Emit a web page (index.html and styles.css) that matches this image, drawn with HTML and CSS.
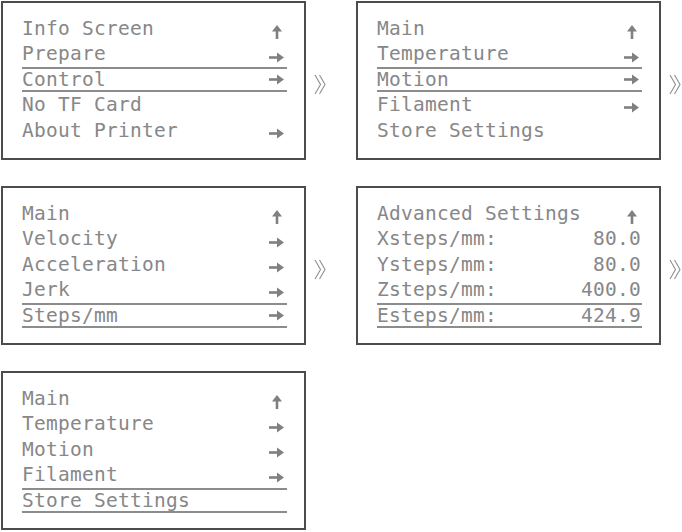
FILE: index.html
```html
<!DOCTYPE html>
<html lang="en">
<head>
<meta charset="utf-8">
<title>Printer menu screens</title>
<link rel="stylesheet" href="styles.css">
</head>
<body>
<div class="screens">

  <div class="panel">
    <div class="screen">
      <div class="row"><span class="label">Info Screen</span><svg class="icon up" viewBox="0 0 12 14"><path d="M6 14V4"/><polygon points="1,6.5 6,0 11,6.5"/></svg></div>
      <div class="row"><span class="label">Prepare</span><svg class="icon right" viewBox="0 0 15 11"><path d="M0 5.5H10"/><polygon points="8,0.5 15,5.5 8,10.5"/></svg></div>
      <div class="row sel"><span class="label">Control</span><svg class="icon right" viewBox="0 0 15 11"><path d="M0 5.5H10"/><polygon points="8,0.5 15,5.5 8,10.5"/></svg></div>
      <div class="row"><span class="label">No TF Card</span></div>
      <div class="row"><span class="label">About Printer</span><svg class="icon right" viewBox="0 0 15 11"><path d="M0 5.5H10"/><polygon points="8,0.5 15,5.5 8,10.5"/></svg></div>
    </div>
    <div class="sep"><svg viewBox="0 0 13 21"><path d="M1 1L6.5 10.5L1 20"/><path d="M5.5 1L11 10.5L5.5 20"/></svg></div>
  </div>

  <div class="panel">
    <div class="screen">
      <div class="row"><span class="label">Main</span><svg class="icon up" viewBox="0 0 12 14"><path d="M6 14V4"/><polygon points="1,6.5 6,0 11,6.5"/></svg></div>
      <div class="row"><span class="label">Temperature</span><svg class="icon right" viewBox="0 0 15 11"><path d="M0 5.5H10"/><polygon points="8,0.5 15,5.5 8,10.5"/></svg></div>
      <div class="row sel"><span class="label">Motion</span><svg class="icon right" viewBox="0 0 15 11"><path d="M0 5.5H10"/><polygon points="8,0.5 15,5.5 8,10.5"/></svg></div>
      <div class="row"><span class="label">Filament</span><svg class="icon right" viewBox="0 0 15 11"><path d="M0 5.5H10"/><polygon points="8,0.5 15,5.5 8,10.5"/></svg></div>
      <div class="row"><span class="label">Store Settings</span></div>
    </div>
    <div class="sep"><svg viewBox="0 0 13 21"><path d="M1 1L6.5 10.5L1 20"/><path d="M5.5 1L11 10.5L5.5 20"/></svg></div>
  </div>

  <div class="panel">
    <div class="screen">
      <div class="row"><span class="label">Main</span><svg class="icon up" viewBox="0 0 12 14"><path d="M6 14V4"/><polygon points="1,6.5 6,0 11,6.5"/></svg></div>
      <div class="row"><span class="label">Velocity</span><svg class="icon right" viewBox="0 0 15 11"><path d="M0 5.5H10"/><polygon points="8,0.5 15,5.5 8,10.5"/></svg></div>
      <div class="row"><span class="label">Acceleration</span><svg class="icon right" viewBox="0 0 15 11"><path d="M0 5.5H10"/><polygon points="8,0.5 15,5.5 8,10.5"/></svg></div>
      <div class="row"><span class="label">Jerk</span><svg class="icon right" viewBox="0 0 15 11"><path d="M0 5.5H10"/><polygon points="8,0.5 15,5.5 8,10.5"/></svg></div>
      <div class="row sel"><span class="label">Steps/mm</span><svg class="icon right" viewBox="0 0 15 11"><path d="M0 5.5H10"/><polygon points="8,0.5 15,5.5 8,10.5"/></svg></div>
    </div>
    <div class="sep"><svg viewBox="0 0 13 21"><path d="M1 1L6.5 10.5L1 20"/><path d="M5.5 1L11 10.5L5.5 20"/></svg></div>
  </div>

  <div class="panel">
    <div class="screen">
      <div class="row"><span class="label">Advanced Settings</span><svg class="icon up" viewBox="0 0 12 14"><path d="M6 14V4"/><polygon points="1,6.5 6,0 11,6.5"/></svg></div>
      <div class="row"><span class="label">Xsteps/mm:</span><span class="value">80.0</span></div>
      <div class="row"><span class="label">Ysteps/mm:</span><span class="value">80.0</span></div>
      <div class="row"><span class="label">Zsteps/mm:</span><span class="value">400.0</span></div>
      <div class="row sel"><span class="label">Esteps/mm:</span><span class="value">424.9</span></div>
    </div>
    <div class="sep"><svg viewBox="0 0 13 21"><path d="M1 1L6.5 10.5L1 20"/><path d="M5.5 1L11 10.5L5.5 20"/></svg></div>
  </div>

  <div class="panel">
    <div class="screen">
      <div class="row"><span class="label">Main</span><svg class="icon up" viewBox="0 0 12 14"><path d="M6 14V4"/><polygon points="1,6.5 6,0 11,6.5"/></svg></div>
      <div class="row"><span class="label">Temperature</span><svg class="icon right" viewBox="0 0 15 11"><path d="M0 5.5H10"/><polygon points="8,0.5 15,5.5 8,10.5"/></svg></div>
      <div class="row"><span class="label">Motion</span><svg class="icon right" viewBox="0 0 15 11"><path d="M0 5.5H10"/><polygon points="8,0.5 15,5.5 8,10.5"/></svg></div>
      <div class="row"><span class="label">Filament</span><svg class="icon right" viewBox="0 0 15 11"><path d="M0 5.5H10"/><polygon points="8,0.5 15,5.5 8,10.5"/></svg></div>
      <div class="row sel"><span class="label">Store Settings</span></div>
    </div>
  </div>

</div>
</body>
</html>
```

FILE: styles.css
```css
* { box-sizing: border-box; }

html, body {
  margin: 0;
  background: #ffffff;
}

body {
  padding: 1px 0 0 1px;
  font-family: "DejaVu Sans Mono", "Liberation Mono", monospace;
  color: #878787;
}

.screens {
  display: grid;
  grid-template-columns: 355px 326px;
  row-gap: 26px;
}

.panel {
  display: flex;
  align-items: flex-start;
}

.screen {
  flex: none;
  width: 305px;
  height: 159px;
  border: 2px solid #4c4c4c;
  padding: 13px 17px 0 19px;
}

.row {
  display: flex;
  align-items: center;
  justify-content: space-between;
  height: 25.4px;
  font-size: 19.5px;
  line-height: 25.4px;
  letter-spacing: 0.26px;
  white-space: pre;
}

.row.sel {
  box-shadow: inset 0 2px 0 #8c8c8c, inset 0 -2px 0 #8c8c8c;
}

.value {
  margin-right: 1px;
}

.icon {
  flex: none;
  margin-right: 3px;
  margin-top: 6px;
  fill: #808080;
  stroke: #808080;
}

.row.sel .icon {
  margin-top: 0;
}

.icon path {
  stroke-width: 2.6;
  fill: none;
}

.icon polygon {
  stroke: none;
}

.icon.right {
  width: 15px;
  height: 11px;
}

.icon.up {
  width: 12px;
  height: 14px;
  margin-right: 4px;
}

.sep {
  flex: 0 1 50px;
  min-width: 0;
  height: 159px;
  display: flex;
  align-items: center;
  padding-left: 8px;
  padding-top: 8px;
}

.sep svg {
  flex: none;
  width: 13px;
  height: 21px;
  fill: none;
  stroke: #8e8e8e;
  stroke-width: 1.1;
}
```
